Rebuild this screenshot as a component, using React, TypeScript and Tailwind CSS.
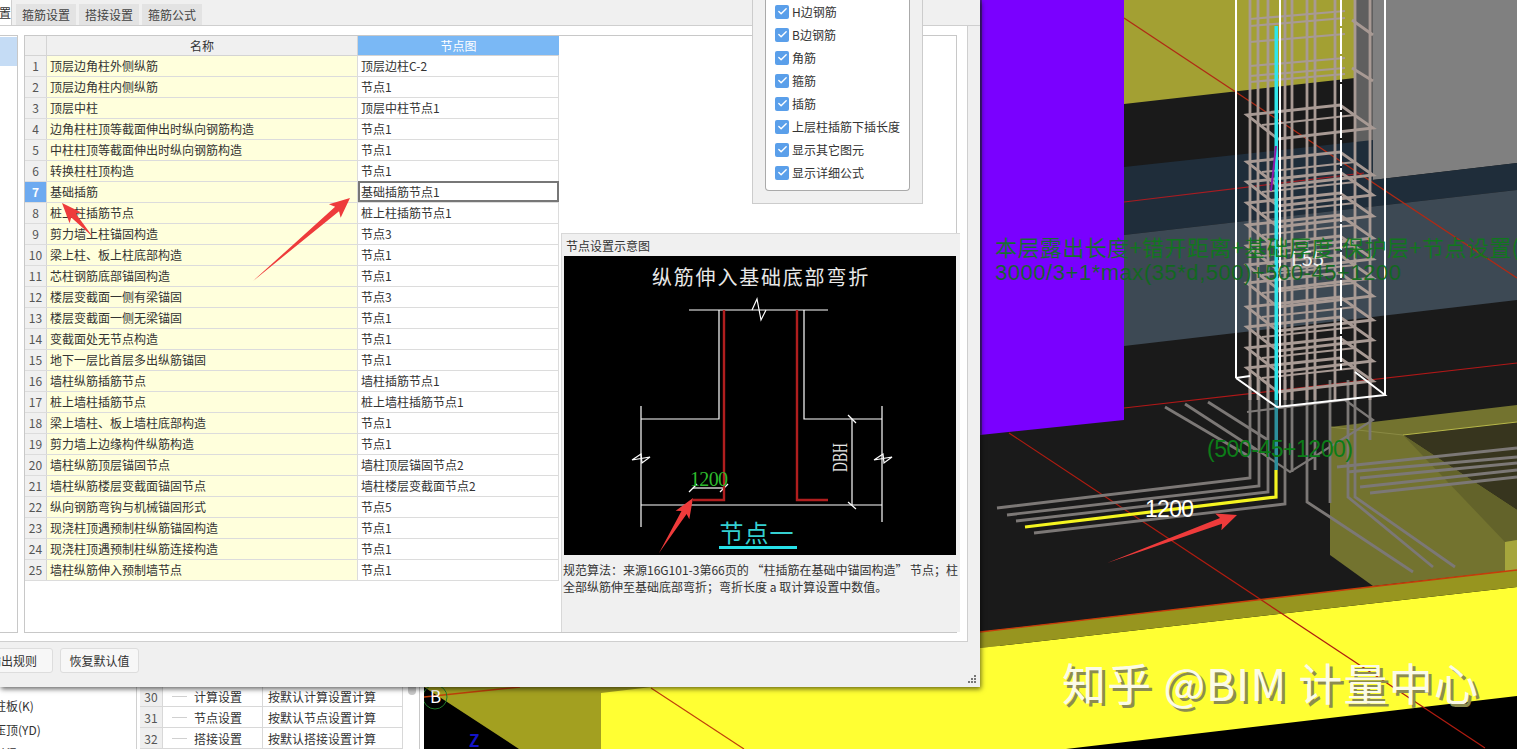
import { Check } from "lucide-react";

const rows = [
  ["顶层边角柱外侧纵筋", "顶层边柱C-2"],
  ["顶层边角柱内侧纵筋", "节点1"],
  ["顶层中柱", "顶层中柱节点1"],
  ["边角柱柱顶等截面伸出时纵向钢筋构造", "节点1"],
  ["中柱柱顶等截面伸出时纵向钢筋构造", "节点1"],
  ["转换柱柱顶构造", "节点1"],
  ["基础插筋", "基础插筋节点1"],
  ["桩上柱插筋节点", "桩上柱插筋节点1"],
  ["剪力墙上柱锚固构造", "节点3"],
  ["梁上柱、板上柱底部构造", "节点1"],
  ["芯柱钢筋底部锚固构造", "节点1"],
  ["楼层变截面一侧有梁锚固", "节点3"],
  ["楼层变截面一侧无梁锚固", "节点1"],
  ["变截面处无节点构造", "节点1"],
  ["地下一层比首层多出纵筋锚固", "节点1"],
  ["墙柱纵筋插筋节点", "墙柱插筋节点1"],
  ["桩上墙柱插筋节点", "桩上墙柱插筋节点1"],
  ["梁上墙柱、板上墙柱底部构造", "节点1"],
  ["剪力墙上边缘构件纵筋构造", "节点1"],
  ["墙柱纵筋顶层锚固节点", "墙柱顶层锚固节点2"],
  ["墙柱纵筋楼层变截面锚固节点", "墙柱楼层变截面节点2"],
  ["纵向钢筋弯钩与机械锚固形式", "节点5"],
  ["现浇柱顶遇预制柱纵筋锚固构造", "节点1"],
  ["现浇柱顶遇预制柱纵筋连接构造", "节点1"],
  ["墙柱纵筋伸入预制墙节点", "节点1"],
];

const checks = ["H边钢筋", "B边钢筋", "角筋", "箍筋", "插筋", "上层柱插筋下插长度", "显示其它图元", "显示详细公式"];

const lowerRows = [
  ["30", "计算设置", "按默认计算设置计算"],
  ["31", "节点设置", "按默认节点设置计算"],
  ["32", "搭接设置", "按默认搭接设置计算"],
];

const verticals = [1250, 1258, 1268, 1285, 1292, 1307, 1315, 1335, 1355, 1370];
const hoops = [115, 162, 182, 203, 225, 246, 265, 283, 307, 327, 348, 368];
const upperLines = [15, 22, 38, 62, 72, 78];

function arrowPoints(tx: number, ty: number, hx: number, hy: number, head = 17, wide = 9, neck = 3) {
  const len = Math.hypot(hx - tx, hy - ty);
  const ux = (hx - tx) / len;
  const uy = (hy - ty) / len;
  const nx = -uy;
  const ny = ux;
  const bx = hx - ux * head;
  const by = hy - uy * head;
  const pts = [
    [tx, ty],
    [bx + nx * neck, by + ny * neck],
    [bx + nx * wide - ux * 3, by + ny * wide - uy * 3],
    [hx, hy],
    [bx - nx * wide - ux * 3, by - ny * wide - uy * 3],
    [bx - nx * neck, by - ny * neck],
  ];
  return pts.map((p) => p.join(",")).join(" ");
}

const Scene = () => (
  <svg viewBox="424 0 1093 749" className="h-[749px] w-[1093px] shrink-0 bg-black">
    <polygon points="424,660 1000,600 1000,749 519,749 441,698 424,687" fill="#a3a020" />
    <polygon points="601,693 980,648 1517,587 1517,696 1066,749 601,749" fill="#ffff33" />
    <polygon points="980,0 1517,0 1517,570 980,632" fill="#1a1a1a" />
    <polygon points="980,632 1517,570 1517,587 980,648" fill="#97951f" />
    <polygon points="1124,0 1355,0 1355,78 1124,104" fill="#a3a033" />
    <polygon points="1355,0 1517,0 1517,163 1355,182" fill="#808080" />
    <polygon points="1355,0 1373,0 1373,180 1355,182" fill="#5f5f5f" />
    <polygon points="1124,167 1373,140 1373,180 1517,163 1517,190 1124,235" fill="#1f2d3a" />
    <polygon points="1124,235 1517,190 1517,300 1124,346" fill="#3d4954" />

    <polygon points="1330,427 1517,405 1517,570 1373,586 1330,555" fill="#73732f" />
    <polygon points="1403,435 1517,422 1517,510" fill="#37351e" />
    <polygon points="1403,435 1517,510 1517,540 1505,542" fill="#63632a" />
    <polygon points="1505,542 1517,540 1517,570 1505,572" fill="#a6a63c" />
    <line x1="1403" y1="435" x2="1517" y2="422" stroke="#b8b84a" />
    <line x1="1330" y1="427" x2="1403" y2="435" stroke="#8a8a44" />

    <line x1="1124" y1="18" x2="1517" y2="278" stroke="#b02a15" strokeWidth="1.3" />
    <line x1="1124" y1="202" x2="1364" y2="173" stroke="#a81c22" strokeWidth="1.2" />
    <line x1="1124" y1="408" x2="1517" y2="363" stroke="#b01818" strokeWidth="1.2" />
    <line x1="1009" y1="433" x2="1485" y2="748" stroke="#b01c10" strokeWidth="1.2" />
    <line x1="651" y1="688" x2="744" y2="749" stroke="#c0400a" strokeWidth="1.2" />
    <line x1="980" y1="632" x2="1517" y2="570" stroke="#c83c0a" strokeWidth="1.4" />
    <line x1="424" y1="697" x2="520" y2="687" stroke="#c0400a" strokeWidth="1.4" />

    <g fill="none" stroke="#7c7876" strokeWidth="2.8">
      <polyline points="997,508 1250,478 1250,380" />
      <polyline points="1007,515 1259,486 1259,380" />
      <polyline points="1016,521 1268,492 1268,380" />
      <polyline points="1034,533 1285,504 1285,380" />
      <polyline points="1165,407 1250,457" />
      <polyline points="1185,404 1259,452" />
      <polyline points="1208,402 1268,440" />
      <polyline points="1292,380 1292,472" />
      <polyline points="1307,380 1307,502 1330,517 1413,572" />
      <polyline points="1315,380 1315,470" />
      <polyline points="1330,380 1330,503" />
      <polyline points="1348,380 1348,497 1433,567" />
      <polyline points="1355,380 1355,497 1455,567" />
      <polyline points="1370,380 1370,440" />
      <polyline points="1247,412 1345,400 1373,420 1290,472 1250,445" strokeWidth="2.2" />
      <polyline points="1337,467 1517,448" />
      <polyline points="1347,472 1517,457" />
      <polyline points="1360,478 1517,463" />
      <polyline points="1360,487 1517,470" />
      <polyline points="1370,493 1517,477" />
    </g>
    <polyline points="1025,527 1276,497 1276,470" fill="none" stroke="#f4f420" strokeWidth="3.2" />

    <g fill="none" stroke="#a89a94" strokeWidth="2.8">
      {verticals.map((x) => (
        <line key={x} x1={x} y1="0" x2={x} y2="400" />
      ))}
      {hoops.map((y) => (
        <g key={y}>
          <polygon points={`1247,${y} 1340,${y - 10} 1373,${y + 13} 1278,${y + 24}`} />
          <line x1="1262" y1={y + 10} x2="1355" y2={y} strokeWidth="2" />
        </g>
      ))}
      {upperLines.map((y) => (
        <line key={y} x1="1250" y1={y + 4} x2="1345" y2={y - 4} strokeWidth="2.2" />
      ))}
      <line x1="1352" y1="20" x2="1373" y2="35" />
      <line x1="1352" y1="68" x2="1373" y2="81" />
    </g>

    <rect x="1274.5" y="26" width="3.5" height="374" fill="#2fe6ea" />
    <rect x="1274.5" y="400" width="3.5" height="70" fill="#2c8f9c" />
    <line x1="1276" y1="146" x2="1271" y2="191" stroke="#8a1aa8" strokeWidth="2" />

    <g fill="none" stroke="#ffffff" strokeWidth="2">
      <line x1="1236" y1="0" x2="1236" y2="378" />
      <line x1="1280" y1="0" x2="1280" y2="407" />
      <line x1="1385" y1="0" x2="1385" y2="395" />
      <line x1="1341" y1="0" x2="1341" y2="370" strokeDasharray="26 2" />
      <polyline points="1236,378 1277,407 1385,395 1355,372" />
      <line x1="1236" y1="378" x2="1250" y2="376" />
    </g>

    <polygon points="980,0 1124,0 1124,420 980,435" fill="#7a00ff" />
    <rect x="980" y="0" width="2" height="435" fill="#4a1a90" />

    <circle cx="435" cy="697" r="12" fill="none" stroke="#1f7a2a" />
    <text x="430" y="703" fill="#ffffff" fontSize="17">B</text>
    <text x="469" y="747" fill="#1414c8" fontSize="17" fontWeight="700">Z</text>

    <text x="1291" y="266" fill="#f2f2f2" fontSize="20">L55</text>
    <text x="995" y="256" fill="#0c7c18" fontSize="22" fillOpacity="0.9" textLength="524">本层露出长度+错开距离+基础厚度-保护层+节点设置(</text>
    <text x="995" y="280" fill="#0c6c18" fontSize="22" fillOpacity="0.9" textLength="406" className="font-['Liberation_Sans',sans-serif]">3000/3+1*max(35*d,500)+500-45+1200</text>
    <text x="1207" y="457" fill="#0c7c18" fontSize="23" textLength="146" className="font-['Liberation_Sans',sans-serif]">(500-45+1200)</text>
    <text x="1145" y="517" fill="#ffffff" fontSize="23" textLength="49" className="font-['Liberation_Sans',sans-serif]">1200</text>

    <polygon points={arrowPoints(1107, 563, 1237, 515, 17, 9, 3)} fill="#ee3b3b" />

    <g fontSize="44" className="font-['Noto_Sans_CJK_SC','Liberation_Sans',sans-serif]">
      <text x="1065" y="704" fill="#8c8c50" textLength="416">知乎 @BIM 计量中心</text>
      <text x="1062" y="701" fill="#fbfbe8" textLength="416">知乎 @BIM 计量中心</text>
    </g>
  </svg>
);

const NodeDiagram = () => (
  <svg viewBox="0 0 392 299" className="block h-[299px] w-[392px] bg-black">
    <text x="197" y="29" fill="#e8e8e8" fontSize="20" textAnchor="middle" letterSpacing="1.8">纵筋伸入基础底部弯折</text>
    <g fill="none" stroke="#ffffff" strokeWidth="1.2">
      <line x1="125" y1="54" x2="264" y2="54" />
      <polyline points="188,54 193,43 197,64 202,54" />
      <polyline points="77,163 155,163 155,54" />
      <polyline points="240,54 240,163 318,163" />
      <line x1="77" y1="150" x2="77" y2="271" />
      <line x1="318" y1="150" x2="318" y2="266" />
      <line x1="77" y1="249" x2="318" y2="249" />
      <polyline points="68,204 77,198 78,207 86,201 68,204" />
      <polyline points="310,204 319,198 320,207 328,201 310,204" />
      <line x1="288" y1="163" x2="288" y2="249" />
      <line x1="284" y1="159" x2="292" y2="167" />
      <line x1="284" y1="246" x2="292" y2="253" />
      <line x1="129" y1="232" x2="160" y2="232" />
      <line x1="125" y1="236" x2="133" y2="228" />
      <line x1="156" y1="236" x2="164" y2="228" />
    </g>
    <polyline points="160,54 160,244 129,244" fill="none" stroke="#b01e1e" strokeWidth="2.4" />
    <polyline points="233,54 233,244 264,244" fill="none" stroke="#b01e1e" strokeWidth="2.4" />
    <text x="126" y="230" fill="#2db82d" fontSize="20" textLength="38" className="font-['Liberation_Serif',serif]">1200</text>
    <text transform="translate(283 216) rotate(-90)" fill="#e8e8e8" fontSize="20" textLength="29" lengthAdjust="spacingAndGlyphs" className="font-['Liberation_Serif',serif]">DBH</text>
    <text x="193" y="286" fill="#35cfd0" fontSize="24" textAnchor="middle" letterSpacing="1">节点一</text>
    <rect x="155" y="290" width="78" height="3" fill="#27e0e8" />
  </svg>
);

const RuleGrid = () => (
  <div className="w-[534px] shrink-0">
    <div className="flex h-5 border-b border-[#d4d4d4] bg-[#f0f0f0]">
      <div className="w-[22px] shrink-0 border-r border-[#d4d4d4]" />
      <div className="w-[311px] shrink-0 border-r border-[#d4d4d4] text-center leading-[19px]">名称</div>
      <div className="flex-1 bg-[#7ab8f5] text-center leading-[19px] text-white">节点图</div>
    </div>
    {rows.map(([name, node], i) => (
      <div key={name} className="flex h-[21px] border-b border-[#dcdcdc] leading-[20px]">
        <div className={`w-[22px] shrink-0 border-r border-[#d4d4d4] text-center ${i === 6 ? "bg-[#6daaf0] font-bold text-white" : "bg-[#f0f0f0] text-[#555555]"}`}>
          {i + 1}
        </div>
        <div className="w-[311px] shrink-0 border-r border-[#dcdcdc] bg-[#ffffdc] pl-[3px]">{name}</div>
        {i === 6 ? (
          <div className="-mt-px h-[21px] flex-1 border-2 border-[#777777] pl-[1px] leading-[18px]">{node}</div>
        ) : (
          <div className="flex-1 border-r border-[#dcdcdc] pl-[3px]">{node}</div>
        )}
      </div>
    ))}
  </div>
);

const PreviewPanel = () => (
  <div className="mt-[197px] mr-[-3px] ml-[2px] h-[399px] w-[399px] shrink-0 overflow-hidden border-t border-l border-[#d8d8d8] bg-[#f0f0f0] pl-[2px]">
    <div className="h-[22px] pl-[2px] leading-[23px]">节点设置示意图</div>
    <NodeDiagram />
    <p className="mt-[6px] -ml-px w-[420px] whitespace-nowrap leading-[17px]">
      规范算法：来源16G101-3第66页的 “柱插筋在基础中锚固构造” 节点；柱
      <br />
      全部纵筋伸至基础底部弯折；弯折长度 a 取计算设置中数值。
    </p>
  </div>
);

const CheckPopup = () => (
  <div className="absolute top-0 left-[752px] h-[204px] w-[171px] border-r border-b border-l border-[#cccccc] bg-[#f0f0f0] px-3">
    <div className="h-[191px] rounded-b-[4px] border-r border-b border-l border-[#aaaaaa] bg-white pl-[9px]">
      <div className="flex h-[184px] flex-col justify-end">
        {checks.map((label) => (
          <div key={label} className="flex h-[23px] shrink-0 items-center gap-[3px] whitespace-nowrap">
            <span className="flex h-[14px] w-[14px] items-center justify-center rounded-[2px] bg-[#5a9fea]">
              <Check size={11} strokeWidth={3} className="text-white" />
            </span>
            {label}
          </div>
        ))}
      </div>
    </div>
  </div>
);

const Dialog = () => (
  <div className="absolute top-0 left-0 h-[687px] w-[980px] overflow-hidden bg-[#f0f0f0] shadow-[1px_2px_5px_rgba(0,0,0,0.6)]">
    <div className="flex h-[26px] items-end gap-[3px] border-b border-[#cfcfcf] pr-[13px]">
      <div className="-ml-[42px] mr-[1px] h-[26px] w-[54px] rounded-t-[2px] border-r border-[#cfcfcf] bg-white text-right leading-[28px]">节点设置</div>
      {["箍筋设置", "搭接设置", "箍筋公式"].map((t) => (
        <div key={t} className="h-[21px] w-[60px] bg-[#e3e3e3] text-center leading-[21px] text-[#444444]">{t}</div>
      ))}
    </div>
    <div className="h-[616px] w-[968px] border-r border-b border-[#cfcfcf] bg-white pt-[9px]">
      <div className="flex h-[598px]">
        <div className="h-[598px] w-[18px] shrink-0 border-r border-b border-t border-[#c8c8c8] pt-px">
          <div className="h-[29px] bg-[#c5dcf5]" />
        </div>
        <div className="ml-[6px] flex h-[598px] w-[933px] border border-[#c8c8c8]">
          <RuleGrid />
          <PreviewPanel />
        </div>
      </div>
    </div>
    <div className="flex gap-[7px] pt-[6px]">
      <button className="-ml-[27px] h-[25px] w-[80px] rounded-[3px] border border-[#dddddd] bg-[#f7f7f7]">输出规则</button>
      <button className="h-[25px] w-[79px] rounded-[3px] border border-[#dddddd] bg-[#f7f7f7]">恢复默认值</button>
    </div>
    <CheckPopup />
    <svg viewBox="0 0 980 687" className="pointer-events-none absolute inset-0 h-[687px] w-[980px]">
      <polygon points={arrowPoints(253, 281, 350, 198, 17, 9, 3)} fill="#ee3b3b" />
      <polygon points={arrowPoints(93, 237, 62, 203, 17, 8, 3)} fill="#ee3b3b" />
      <polygon points={arrowPoints(659, 553, 693, 498, 17, 8, 3)} fill="#ee3b3b" />
      <g fill="#777777">
        <rect x="974" y="675" width="2" height="2" />
        <rect x="971" y="678" width="2" height="2" />
        <rect x="974" y="678" width="2" height="2" />
        <rect x="968" y="681" width="2" height="2" />
        <rect x="971" y="681" width="2" height="2" />
        <rect x="974" y="681" width="2" height="2" />
      </g>
    </svg>
  </div>
);

const LowerPanels = () => (
  <div className="flex h-[749px] w-[424px] shrink-0 overflow-hidden bg-white">
    <div className="h-[749px] w-[137px] shrink-0 border-r border-[#d0d0d0] pt-[694px] pl-0">
      {["柱板(K)", "压顶(YD)", "过梁(G)"].map((t) => (
        <div key={t} className="-ml-[6px] h-6 leading-6 whitespace-nowrap">{t}</div>
      ))}
    </div>
    <div className="ml-[3px] h-[749px] w-[263px] shrink-0 pt-[686px]">
      {lowerRows.map(([num, a, b]) => (
        <div key={num} className="flex h-[21px] border-b border-[#d8d8d8] leading-[21px]">
          <div className="w-[23px] shrink-0 border-r border-[#d8d8d8] bg-[#efefef] text-center text-[#555555]">{num}</div>
          <div className="flex w-[100px] shrink-0 items-center border-r border-[#d8d8d8] pl-[9px]">
            <span className="mr-[7px] h-px w-[15px] bg-[#d0d0d0]" />
            {a}
          </div>
          <div className="flex-1 border-r border-[#d8d8d8] pl-[5px]">{b}</div>
        </div>
      ))}
    </div>
    <div className="ml-[5px] h-[695px] w-2 shrink-0 rounded-b bg-[#c8c8c8]" />
    <div className="ml-[3px] h-[749px] w-px shrink-0 bg-[#c8c8c8]" />
  </div>
);

const App = () => {
  return (
    <div className="relative flex h-[749px] w-[1517px] overflow-hidden text-[12px] text-[#333333] font-['Noto_Sans_CJK_SC','Liberation_Sans',sans-serif]">
      <LowerPanels />
      <Scene />
      <Dialog />
    </div>
  );
};

export default App;
